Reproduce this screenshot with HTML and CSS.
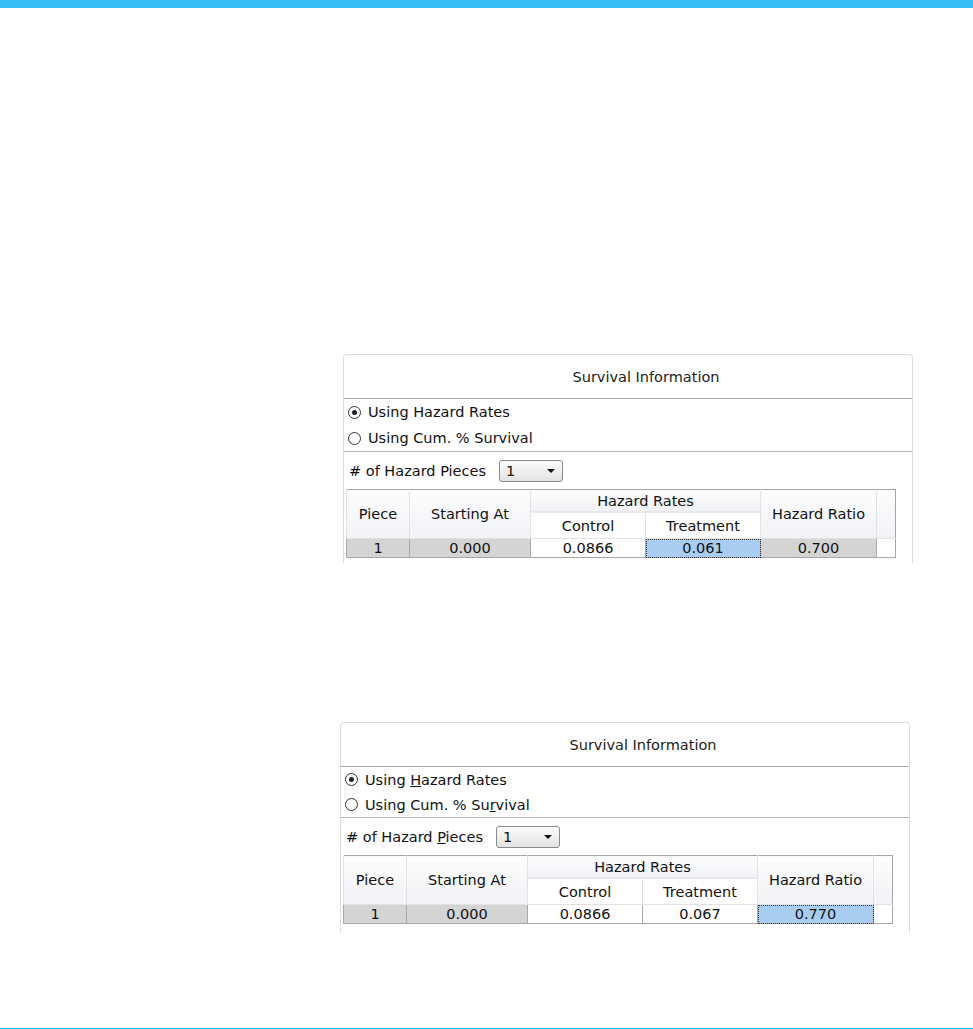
FILE: index.html
```html
<!DOCTYPE html>
<html lang="en">

<head>
    <meta charset="UTF-8">
    <meta name="viewport" content="width=device-width, initial-scale=1.0">
    <title>Survival Information</title>
    <link rel="stylesheet" href="styles.css">
</head>

<body>
    <div class="topbar"></div>

    <main class="pagina">
        <section class="painel painel-um">
            <div class="titulo">Survival Information</div>
            <div class="radios">
                <label class="opcao"><span class="radio marcado"></span><span>Using Hazard Rates</span></label>
                <label class="opcao"><span class="radio"></span><span>Using Cum. % Survival</span></label>
            </div>
            <div class="pedacos">
                <span>&#35; of Hazard Pieces</span>
                <div class="combo"><span>1</span><span class="seta"></span></div>
            </div>
            <table class="tabela">
                <colgroup>
                    <col class="c-piece"><col class="c-start"><col class="c-ctrl"><col class="c-trt"><col class="c-ratio"><col class="c-vazio">
                </colgroup>
                <tr class="cab1">
                    <th rowspan="2">Piece</th>
                    <th rowspan="2">Starting At</th>
                    <th colspan="2" class="grupo">Hazard Rates</th>
                    <th rowspan="2">Hazard Ratio</th>
                    <th rowspan="2" class="vazio"></th>
                </tr>
                <tr class="cab2">
                    <th>Control</th>
                    <th>Treatment</th>
                </tr>
                <tr class="dados">
                    <td class="fixo">1</td>
                    <td class="fixo">0.000</td>
                    <td>0.0866</td>
                    <td class="selecionado">0.061</td>
                    <td class="fixo">0.700</td>
                    <td class="vazio"></td>
                </tr>
            </table>
        </section>

        <section class="painel painel-dois">
            <div class="titulo">Survival Information</div>
            <div class="radios">
                <label class="opcao"><span class="radio marcado"></span><span>Using <u>H</u>azard Rates</span></label>
                <label class="opcao"><span class="radio"></span><span>Using Cum. % Su<u>r</u>vival</span></label>
            </div>
            <div class="pedacos">
                <span>&#35; of Hazard <u>P</u>ieces</span>
                <div class="combo"><span>1</span><span class="seta"></span></div>
            </div>
            <table class="tabela">
                <colgroup>
                    <col class="c-piece"><col class="c-start"><col class="c-ctrl"><col class="c-trt"><col class="c-ratio"><col class="c-vazio">
                </colgroup>
                <tr class="cab1">
                    <th rowspan="2">Piece</th>
                    <th rowspan="2">Starting At</th>
                    <th colspan="2" class="grupo">Hazard Rates</th>
                    <th rowspan="2">Hazard Ratio</th>
                    <th rowspan="2" class="vazio"></th>
                </tr>
                <tr class="cab2">
                    <th>Control</th>
                    <th>Treatment</th>
                </tr>
                <tr class="dados">
                    <td class="fixo">1</td>
                    <td class="fixo">0.000</td>
                    <td>0.0866</td>
                    <td>0.067</td>
                    <td class="selecionado">0.770</td>
                    <td class="vazio"></td>
                </tr>
            </table>
        </section>
    </main>

    <div class="linhafim"></div>
</body>

</html>
```

FILE: styles.css
```css
html,
body {
    margin: 0;
    padding: 0;
    height: 100%;
}

body {
    background: #ffffff;
    display: flex;
    flex-direction: column;
    font-family: 'DejaVu Sans', sans-serif;
    font-size: 14.5px;
    color: #111111;
}

.topbar {
    height: 8px;
    background-color: #35bef3;
    flex-shrink: 0;
}

.pagina {
    flex: 1;
    display: flex;
    flex-direction: column;
    padding-top: 346px;
}

.linhafim {
    height: 1px;
    background-color: #00aeef;
    flex-shrink: 0;
}

.painel {
    width: 568px;
    border: 1px solid #d9dee4;
    border-bottom: none;
    border-radius: 4px 4px 0 0;
    overflow: hidden;
    background: #ffffff;
}

.painel-um {
    margin-left: 343px;
    height: 208px;
}

.painel-dois {
    margin-left: 340px;
    margin-top: 159px;
    height: 210px;
}

.titulo {
    height: 43px;
    line-height: 45px;
    text-align: center;
    padding-left: 36px;
    border-bottom: 1px solid #a9a9a9;
    color: #222222;
}

.radios {
    padding-left: 4px;
    border-bottom: 1px solid #b4b4b4;
}

.opcao {
    display: flex;
    align-items: center;
    height: 26px;
}

.painel-dois .opcao {
    height: 25px;
}

.radio {
    width: 13px;
    height: 13px;
    border: 1px solid #333;
    border-radius: 50%;
    margin-right: 7px;
    position: relative;
    box-sizing: border-box;
}

.radio.marcado::after {
    content: '';
    position: absolute;
    left: 3px;
    top: 3px;
    width: 5px;
    height: 5px;
    border-radius: 50%;
    background: #222;
}

.pedacos {
    display: flex;
    align-items: center;
    padding: 8px 0 0 5px;
    height: 22px;
    margin-bottom: 7px;
}

.combo {
    margin-left: 13px;
    width: 64px;
    height: 22px;
    border: 1px solid #8a8a8a;
    border-radius: 3px;
    background: linear-gradient(#fbfbfb, #e3e3e3);
    display: flex;
    align-items: center;
    justify-content: space-between;
    padding: 0 7px 0 6px;
    box-sizing: border-box;
}

.seta {
    width: 0;
    height: 0;
    border-left: 4px solid transparent;
    border-right: 4px solid transparent;
    border-top: 4px solid #111;
}

.tabela {
    margin-left: 2px;
    border-collapse: collapse;
    border: 1px solid #a6a6a6;
    table-layout: fixed;
    width: 549px;
}

.c-piece { width: 63px; }
.c-start { width: 121px; }
.c-ctrl { width: 115px; }
.c-trt { width: 115px; }
.c-ratio { width: 116px; }
.c-vazio { width: 19px; }

.tabela th {
    font-weight: normal;
    background: linear-gradient(#fdfdfe, #f0f2f5);
    border-left: 1px solid #e2e2e2;
    border-bottom: 1px solid #e2e2e2;
    padding: 0;
    white-space: nowrap;
}

.cab1 th {
    height: 21px;
}

.cab2 th {
    height: 25px;
    background: #ffffff;
}

.tabela th.grupo {
    border-bottom: 2px solid #e6e8eb;
}

.dados td {
    height: 18px;
    padding: 0;
    text-align: center;
    border-left: 1px solid #a9a9a9;
    background: #ffffff;
}

.dados td.fixo {
    background: #d4d4d4;
}

.dados td.selecionado {
    background: #a9cdf1;
    outline: 1px dotted #333;
    outline-offset: -1px;
}

.dados td.vazio {
    background: #ffffff;
}
```
